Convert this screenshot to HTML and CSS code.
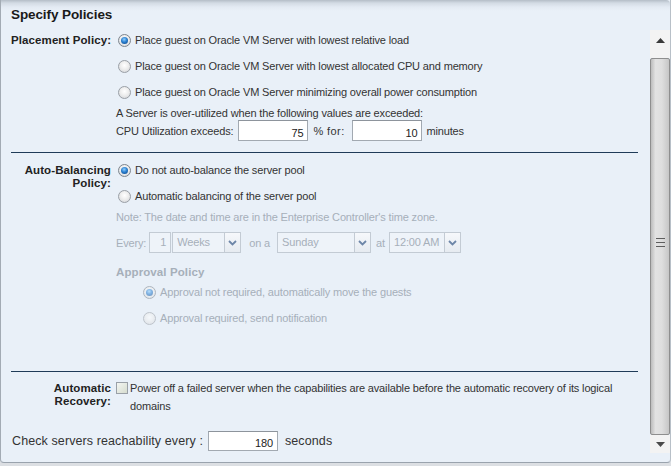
FILE: index.html
```html
<!DOCTYPE html>
<html>
<head>
<meta charset="utf-8">
<link rel="stylesheet" href="styles.css">
</head>
<body>
<div class="panel">
  <div class="head">Specify Policies</div>
  <div class="main">
    <div class="content">
      <div class="group g1">
        <div class="lbl">Placement Policy:</div>
        <div class="fld">
          <div class="opt"><span class="radio on"></span>Place guest on Oracle VM Server with lowest relative load</div>
          <div class="opt"><span class="radio"></span>Place guest on Oracle VM Server with lowest allocated CPU and memory</div>
          <div class="opt"><span class="radio"></span>Place guest on Oracle VM Server minimizing overall power consumption</div>
          <div class="line">A Server is over-utilized when the following values are exceeded:</div>
          <div class="inrow">
            <span>CPU Utilization exceeds:</span>
            <span class="inp cpu">75</span>
            <span class="pct">% for:</span>
            <span class="inp mins">10</span>
            <span>minutes</span>
          </div>
        </div>
      </div>
      <div class="sep"></div>
      <div class="group g2">
        <div class="lbl">Auto-Balancing<br>Policy:</div>
        <div class="fld">
          <div class="opt"><span class="radio on"></span>Do not auto-balance the server pool</div>
          <div class="opt"><span class="radio"></span>Automatic balancing of the server pool</div>
          <div class="line dis">Note: The date and time are in the Enterprise Controller's time zone.</div>
          <div class="every dis">
            <span class="ev-l">Every:</span>
            <span class="dinp one">1</span>
            <span class="sel weeks"><span class="sel-t">Weeks</span><span class="sel-b"><svg width="9" height="6" viewBox="0 0 9 6"><path d="M1 1 L4.5 4.5 L8 1" fill="none" stroke="#6d86a8" stroke-width="1.8"/></svg></span></span>
            <span class="ev-on">on a</span>
            <span class="sel sunday"><span class="sel-t">Sunday</span><span class="sel-b"><svg width="9" height="6" viewBox="0 0 9 6"><path d="M1 1 L4.5 4.5 L8 1" fill="none" stroke="#6d86a8" stroke-width="1.8"/></svg></span></span>
            <span class="ev-at">at</span>
            <span class="sel time"><span class="sel-t">12:00 AM</span><span class="sel-b"><svg width="9" height="6" viewBox="0 0 9 6"><path d="M1 1 L4.5 4.5 L8 1" fill="none" stroke="#6d86a8" stroke-width="1.8"/></svg></span></span>
          </div>
          <div class="apptitle dis">Approval Policy</div>
          <div class="opt sub dis"><span class="radio on faded"></span>Approval not required, automatically move the guests</div>
          <div class="opt sub dis"><span class="radio faded"></span>Approval required, send notification</div>
        </div>
      </div>
      <div class="sep sep2"></div>
      <div class="group g3">
        <div class="lbl">Automatic<br>Recovery:</div>
        <div class="fld">
          <div class="chk-row"><span class="chk"></span><span class="chk-t">Power off a failed server when the capabilities are available before the automatic recovery of its logical domains</span></div>
        </div>
      </div>
      <div class="check">
        <span class="check-l">Check servers reachability every :</span>
        <span class="inp reach">180</span>
        <span>seconds</span>
      </div>
    </div>
    <div class="scroll">
      <div class="sb-up"><svg width="9" height="5" viewBox="0 0 9 5"><path d="M0 5 L4.5 0 L9 5 Z" fill="#3a3a3a"/></svg></div>
      <div class="sb-thumb"><span class="grip"></span></div>
      <div class="sb-down"><svg width="9" height="5" viewBox="0 0 9 5"><path d="M0 0 L4.5 5 L9 0 Z" fill="#4a4a4a"/></svg></div>
    </div>
  </div>
</div>
</body>
</html>
```
FILE: styles.css
```css
html, body {
  margin: 0;
  padding: 0;
}
body {
  background: #dcdfe3;
  font-family: "Liberation Sans", Arial, sans-serif;
  font-size: 11px;
  color: #333;
  letter-spacing: -0.15px;
  width: 671px;
  height: 466px;
  overflow: hidden;
}
.panel {
  box-sizing: border-box;
  width: 671px;
  height: 463px;
  background: #e9f0f8;
  border-left: 1px solid #a3abb4;
  border-right: 1px solid #b8c0c8;
  border-bottom: 1px solid #9aa3ad;
  border-radius: 0 0 4px 4px;
  display: flex;
  flex-direction: column;
}
.head {
  height: 30px;
  box-sizing: border-box;
  padding: 7px 0 0 10px;
  font-size: 13.5px;
  font-weight: bold;
  color: #1a1a1a;
  line-height: 16px;
  letter-spacing: -0.1px;
  background: linear-gradient(#b4bdc7 0, #d3dbe4 3px, #e3eaf3 7px, #e9f0f8 11px);
  border-radius: 0 4px 0 0;
}
.main {
  display: flex;
  height: 423px;
}
.content {
  flex: 1;
  box-sizing: border-box;
  padding: 0 12px 0 10px;
}
.group {
  display: grid;
  grid-template-columns: 100px 1fr;
  column-gap: 5px;
}
.lbl {
  text-align: right;
  font-weight: bold;
  font-size: 11.5px;
  letter-spacing: 0.1px;
  color: #222;
  line-height: 13px;
  padding-top: 4px;
  white-space: nowrap;
}
.opt {
  height: 20px;
  display: flex;
  align-items: center;
}
.opt + .opt {
  margin-top: 6px;
}
.radio {
  box-sizing: border-box;
  width: 13px;
  height: 13px;
  border-radius: 50%;
  border: 1px solid #9a9fa6;
  background: radial-gradient(circle at 50% 40%, #ffffff 0, #eeeeee 45%, #cfd2d6 100%);
  margin: 0 4px 0 2px;
  position: relative;
  flex: none;
}
.radio.on {
  border-color: #7d858e;
}
.radio.on::after {
  content: "";
  position: absolute;
  left: 2px;
  top: 2px;
  width: 7px;
  height: 7px;
  border-radius: 50%;
  background: radial-gradient(circle at 45% 35%, #8fd0ff 0, #2a7fd0 45%, #0a3f7e 100%);
  box-shadow: 0 0 1px #ffffff;
}
.radio.faded {
  opacity: 0.55;
}
.line {
  margin-top: 4px;
  line-height: 14px;
}
.inrow {
  height: 21px;
  display: flex;
  align-items: center;
}
.inp {
  box-sizing: border-box;
  height: 21px;
  background: #fff;
  border: 1px solid #a2a9b1;
  border-top-color: #8d949c;
  text-align: right;
  padding: 5px 4px 0 0;
  line-height: 14px;
  color: #222;
}
.inp.cpu {
  width: 70px;
  margin-left: 5px;
}
.pct {
  margin-left: 5px;
  width: 34px;
  letter-spacing: 0.4px;
  white-space: nowrap;
}
.inp.mins {
  width: 70px;
  margin-left: 5px;
  margin-right: 4px;
}
.sep {
  height: 1px;
  background: #1f3b58;
  margin: 11px 0 7px;
}
.dis {
  color: #a6afba;
}
.every {
  margin-top: 8px;
  height: 21px;
  display: flex;
  align-items: center;
}
.dinp, .sel {
  box-sizing: border-box;
  height: 21px;
  border: 1px solid #c3cbd4;
  background: #eef3f9;
  line-height: 19px;
}
.dinp.one {
  width: 22px;
  margin-left: 3px;
  text-align: right;
  padding-right: 4px;
}
.sel {
  display: flex;
}
.sel-t {
  flex: 1;
  padding-left: 4px;
}
.sel-b {
  width: 15px;
  border-left: 1px solid #c3cbd4;
  background: linear-gradient(#f6f8fb, #e6ebf1);
  display: flex;
  align-items: center;
  justify-content: center;
}
.sel.weeks {
  width: 69px;
  margin-left: 1px;
}
.ev-on {
  margin-left: 8px;
}
.sel.sunday {
  width: 94px;
  margin-left: 7px;
}
.ev-at {
  margin-left: 5px;
}
.sel.time {
  width: 72px;
  margin-left: 4px;
}
.apptitle {
  margin-top: 12px;
  line-height: 14px;
  font-weight: bold;
  font-size: 11.5px;
  letter-spacing: 0.1px;
}
.apptitle + .opt {
  margin-top: 3px;
}
.opt.sub {
  padding-left: 25px;
}
.sep2 {
  margin-top: 43px;
}
.g3 .lbl {
  padding-top: 3px;
}
.chk-row {
  display: flex;
  align-items: flex-start;
  line-height: 18px;
}
.chk {
  flex: none;
  box-sizing: border-box;
  width: 12px;
  height: 12px;
  border: 1px solid #9aa0a7;
  background: linear-gradient(135deg, #f4f6f2, #d6dccf);
  margin: 3px 2px 0 0;
}
.chk-t {
  max-width: 505px;
}
.check {
  margin-top: 16px;
  height: 20px;
  display: flex;
  align-items: center;
  font-size: 12.5px;
  letter-spacing: 0.1px;
}
.check-l {
  margin-left: 1px;
}
.inp.reach {
  width: 70px;
  height: 20px;
  margin: 0 7px 0 5px;
  font-size: 11px;
  letter-spacing: -0.15px;
  padding-top: 4px;
}
.scroll {
  width: 20px;
  display: flex;
  flex-direction: column;
}
.sb-up {
  height: 28px;
  background: #f3f3f3;
  display: flex;
  justify-content: center;
  padding-top: 8px;
  box-sizing: border-box;
}
.sb-thumb {
  flex: 1;
  box-sizing: border-box;
  border: 1px solid #8e8e8e;
  border-radius: 2px;
  background: linear-gradient(90deg, #bcbcbc 0, #e2e2e2 25%, #dedede 60%, #c6c6c6 100%);
  display: flex;
  justify-content: center;
  padding-top: 179px;
}
.grip {
  width: 9px;
  height: 9px;
  background: repeating-linear-gradient(#5e5e5e 0, #5e5e5e 1px, transparent 1px, transparent 4px);
}
.sb-down {
  height: 18px;
  background: #f3f3f3;
  display: flex;
  justify-content: center;
  align-items: center;
}
```
